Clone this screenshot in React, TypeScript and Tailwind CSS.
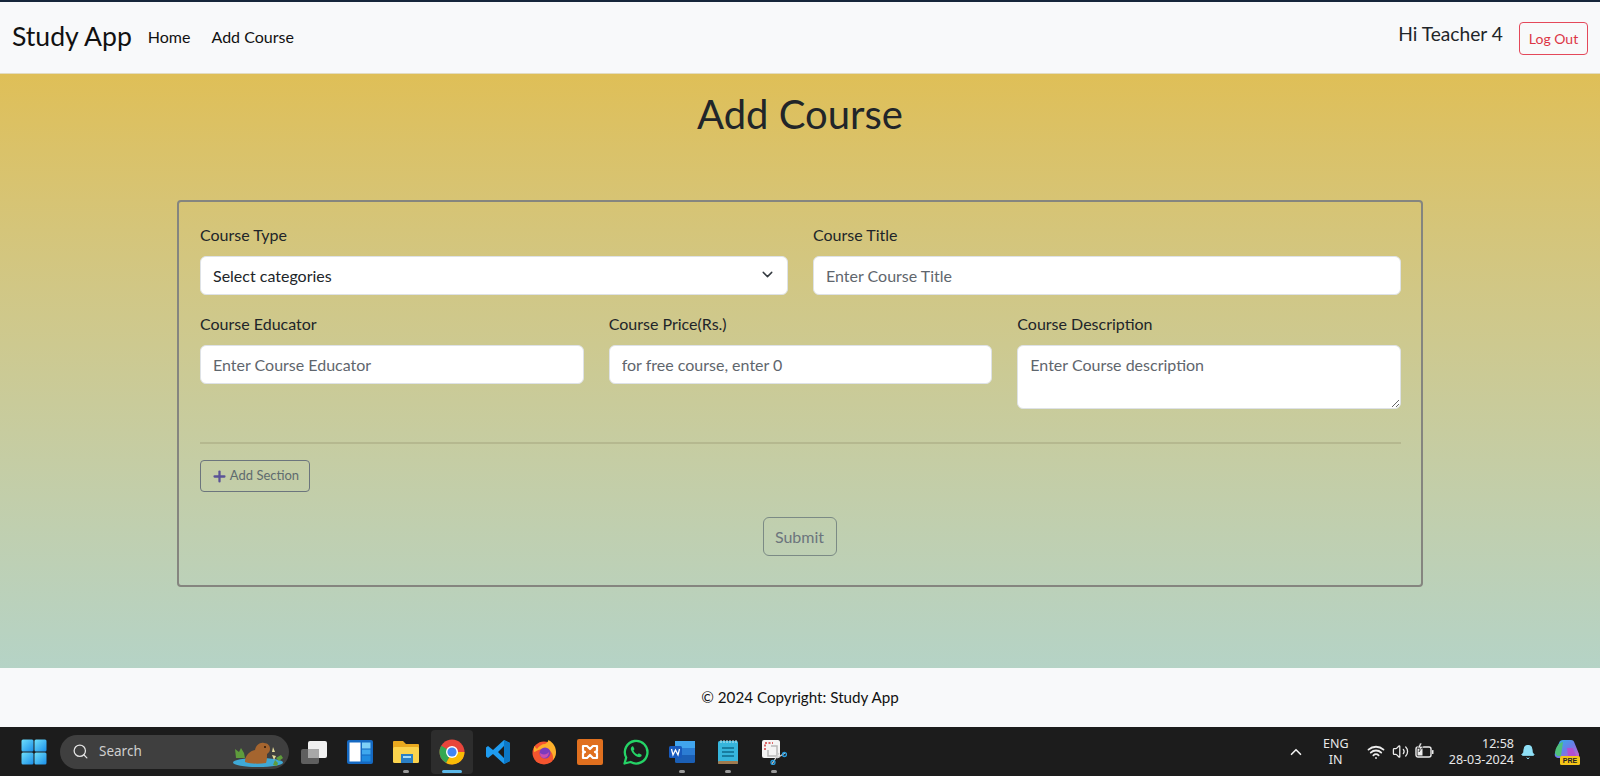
import { ChevronDown, Search, Plus, Wifi, Volume2, ChevronUp, Bell } from "lucide-react";

const field =
  "block w-full h-[39px] rounded-md border border-[#dee2e6] bg-white px-3 text-[16px] text-[#212529] placeholder:text-[#5f666d] outline-none";

function Label({ children }: { children: string }) {
  return <label className="block mb-[9px] h-[24px] leading-[24px] text-[16px] text-[#212529]">{children}</label>;
}

function Slot({ children, active, dot }: { children: React.ReactNode; active?: boolean; dot?: boolean }) {
  return (
    <div className={`relative flex h-[44px] items-center justify-center rounded ${active ? "mx-[2px] w-[42px] bg-[#2d2d2d]" : "w-[46px]"}`}>
      {children}
      {active && <span className="absolute bottom-[1px] left-[11px] h-[3px] w-[20px] rounded-full bg-[#5cb8e8]" />}
      {dot && <span className="absolute bottom-[1px] left-[20px] h-[3px] w-[6px] rounded-full bg-[#9a9a9a]" />}
    </div>
  );
}

function Taskbar() {
  return (
    <div className="flex h-[49px] items-center justify-between bg-[#1c1c1c] font-['Noto_Sans',sans-serif] text-white">
      <div className="flex items-center">
        <div className="flex pl-[21px] pr-[13px]">
          <svg width="26" height="26" viewBox="0 0 26 26">
            <defs>
              <linearGradient id="win" x1="0" y1="0" x2="1" y2="1">
                <stop offset="0" stopColor="#6fe0fb" />
                <stop offset="1" stopColor="#1a8ee8" />
              </linearGradient>
            </defs>
            <rect x="0.5" y="0.5" width="12" height="12" rx="1.5" fill="url(#win)" />
            <rect x="13.5" y="0.5" width="12" height="12" rx="1.5" fill="url(#win)" />
            <rect x="0.5" y="13.5" width="12" height="12" rx="1.5" fill="url(#win)" />
            <rect x="13.5" y="13.5" width="12" height="12" rx="1.5" fill="url(#win)" />
          </svg>
        </div>
        <div className="relative flex h-[34px] w-[229px] items-center rounded-full bg-[#3f3f3f] pl-[12px]">
          <Search size={17} strokeWidth={1.8} className="text-[#e4e4e4]" />
          <span className="ml-[10px] text-[13.5px] text-[#cfcfcf]">Search</span>
          <svg className="absolute right-[4px] top-[5px]" width="56" height="28" viewBox="0 0 56 28">
            <ellipse cx="29" cy="22.500" rx="25" ry="4.500" fill="#3fa9d6" />
            <path d="M7 18l-1-9 4 3 2-4 3 5 1 5z" fill="#5f9c3c" />
            <path d="M16 22c0-7 5-11 10-12 1-5 5-8 9-7 4 0 6 3 6 6 0 3-2 4-3 5 0 3 0 6-1 9-7 1-15 1-21-1z" fill="#a5652f" />
            <circle cx="36" cy="7" r="1" fill="#2a1608" />
            <path d="M44 25V12M43 12l1-5 2 5zM45 20l-2-5 4 1z" fill="#e6dc9a" />
            <path d="M47 18l5-3 2 3-4 3zM44 25l2-5 3 3-1 3z" fill="#5f9c3c" />
          </svg>
        </div>
        <div className="ml-[2px] flex items-center">
          <Slot>
            <svg width="28" height="26" viewBox="0 0 28 26">
              <rect x="1" y="10" width="18" height="15" rx="2" fill="#5f5f5f" />
              <rect x="8" y="2" width="19" height="17" rx="2" fill="#f1f1f1" />
              <rect x="8" y="10" width="11" height="9" fill="#a8a8a8" />
            </svg>
          </Slot>
          <Slot>
            <svg width="26" height="24" viewBox="0 0 26 24">
              <rect width="26" height="24" rx="2" fill="#1569c2" />
              <rect x="2.5" y="2.5" width="11" height="19" fill="#fff" />
              <rect x="15" y="2.5" width="8.5" height="6" fill="#7fd0f7" />
              <rect x="15" y="9.5" width="8.5" height="5" fill="#3fa8ee" />
              <rect x="15" y="15.5" width="8.5" height="6" fill="#1f8be0" />
            </svg>
          </Slot>
          <Slot dot>
            <svg width="28" height="24" viewBox="0 0 28 24">
              <path d="M1 2a1 1 0 011-1h9l3 3h12a1 1 0 011 1v4H1z" fill="#e9a91f" />
              <rect x="1" y="7" width="26" height="16" rx="1.5" fill="#fbd34d" />
              <rect x="9" y="14" width="12" height="9" fill="#2b7fc4" />
              <rect x="11" y="16" width="8" height="2" fill="#a6dcf7" />
            </svg>
          </Slot>
          <Slot active>
            <svg width="26" height="26" viewBox="0 0 26 26">
              <circle cx="13" cy="13" r="12.5" fill="#e8453c" />
              <path d="M13 13L2.2 19.2A12.5 12.5 0 0 1 2.2 6.8z" fill="#34a853" />
              <path d="M13 13h12.5A12.5 12.5 0 0 1 7 24l6-11z" fill="#fbbc05" />
              <path d="M13 13L7 24A12.5 12.5 0 0 1 1.5 18z" fill="#34a853" />
              <circle cx="13" cy="13" r="6" fill="#fff" />
              <circle cx="13" cy="13" r="4.6" fill="#4285f4" />
            </svg>
          </Slot>
          <Slot>
            <svg width="26" height="26" viewBox="0 0 26 26">
              <path d="M19 1l6 3v18l-6 3L8 15l-5 4-2-1.500V8.500L3 7l5 4zM19 7l-6 6 6 6z" fill="#1f9cf0" fillRule="evenodd" />
              <path d="M19 1l6 3v18l-6 3z" fill="#0b78c8" />
            </svg>
          </Slot>
          <Slot>
            <svg width="26" height="26" viewBox="0 0 26 26">
              <circle cx="13" cy="14" r="11.500" fill="#f5552f" />
              <path d="M3 7l3 3c2-3 5-5 8-5 4-2 3-4 3-4 3 1 8 5 8 12 0 3-1 6-3 8 1-7-4-12-10-11-5 0-7 3-9 3z" fill="#fdb02b" />
              <circle cx="14" cy="14" r="5.500" fill="#7b3bbd" />
              <path d="M9 14c2 2 7 2 9-1 0 3-2 6-5 6-3 0-4-3-4-5z" fill="#c94fb0" />
            </svg>
          </Slot>
          <Slot>
            <svg width="26" height="26" viewBox="0 0 26 26">
              <rect width="26" height="26" rx="2" fill="#e0701f" />
              <path d="M6 7h4l3 3 3-3h4v5l-2 1 2 1v5h-4l-3-3-3 3H6v-5l2-1-2-1z" fill="none" stroke="#fff" strokeWidth="2.200" strokeLinejoin="round" />
            </svg>
          </Slot>
          <Slot>
            <svg width="26" height="26" viewBox="0 0 26 26">
              <path d="M1.500 24.500l1.700-6A11.300 11.300 0 1 1 7.600 23z" fill="none" stroke="#25d366" strokeWidth="2.300" strokeLinejoin="round" />
              <path d="M9 7.500c-1 .8-1.500 2-1 3.500 1 3 4 6 7 7 1.500.4 3 0 3.600-1.300.2-.5 0-1-.4-1.200l-2-1c-.4-.2-.8 0-1 .3l-.6.800c-2-.7-3.400-2.200-4.200-4l.7-.8c.3-.3.300-.6.200-1l-.9-2c-.3-.5-1-.7-1.400-.3z" fill="#25d366" />
            </svg>
          </Slot>
          <Slot dot>
            <svg width="26" height="24" viewBox="0 0 26 24">
              <rect x="6" y="1" width="20" height="22" rx="1.500" fill="#1b5fb5" />
              <rect x="6" y="1" width="20" height="7" fill="#41a5ee" />
              <rect x="6" y="8" width="20" height="7" fill="#2b7cd3" />
              <rect x="0" y="6" width="13" height="12" rx="1.500" fill="#185abd" />
              <path d="M2.500 9l1.500 6 2.500-5 2.500 5 1.500-6" fill="none" stroke="#fff" strokeWidth="1.300" />
            </svg>
          </Slot>
          <Slot dot>
            <svg width="22" height="26" viewBox="0 0 22 26">
              <rect x="1" y="2" width="20" height="23" rx="1.500" fill="#36b5dc" />
              <rect x="1" y="22" width="20" height="3" rx="1" fill="#a07a4e" />
              <path d="M5 9h12M5 13h12M5 17h12" stroke="#0f6b8c" strokeWidth="1.600" />
              <path d="M4 1v3M7 1v3M10 1v3M13 1v3M16 1v3M19 1v3" stroke="#bfe8f5" strokeWidth="1" />
            </svg>
          </Slot>
          <Slot dot>
            <svg width="26" height="26" viewBox="0 0 26 26">
              <rect x="1" y="1" width="18" height="18" rx="2" fill="#f4f4f4" />
              <path d="M4 11V4h8" fill="none" stroke="#d43c3c" strokeWidth="1.500" strokeDasharray="2 1.500" />
              <path d="M10 7h6v10H7v-6" fill="none" stroke="#b8b8b8" strokeWidth="1.500" />
              <path d="M11 25l7-11M24 14l-8 5" stroke="#d0d0d0" strokeWidth="1.300" />
              <circle cx="12" cy="23.500" r="2" fill="none" stroke="#2a9fe0" strokeWidth="1.300" />
              <circle cx="23.500" cy="15.500" r="2" fill="none" stroke="#2a9fe0" strokeWidth="1.300" />
            </svg>
          </Slot>
        </div>
      </div>

      <div className="flex items-center pr-[20px]">
        <ChevronUp size={18} strokeWidth={2.200} className="mr-[15px] text-[#f0f0f0]" />
        <div className="mr-[15px] flex w-[32px] flex-col items-center text-[12.5px] leading-[16px] text-[#e8e8e8]">
          <span>ENG</span>
          <span>IN</span>
        </div>
        <Wifi size={18} strokeWidth={2.400} className="mr-[7px] text-[#ececec]" />
        <Volume2 size={17} strokeWidth={1.800} className="mr-[6px] text-[#ececec]" />
        <svg width="19" height="19" viewBox="0 0 19 19" className="mr-[15px] text-[#ececec]">
          <rect x="1" y="5" width="15" height="10" rx="2" fill="none" stroke="currentColor" strokeWidth="1.400" />
          <rect x="2.500" y="6.500" width="5" height="7" fill="currentColor" />
          <rect x="17" y="8" width="1.500" height="4" rx="0.500" fill="currentColor" />
          <path d="M5 1L2.500 6h2.500L4 10l4-5.500H5.500L7 1z" fill="currentColor" stroke="#1c1c1c" strokeWidth="0.600" />
        </svg>
        <div className="flex flex-col items-end text-[12.5px] leading-[16px] text-[#e8e8e8]">
          <span>12:58</span>
          <span>28-03-2024</span>
        </div>
        <Bell size={16} fill="#8fe0f7" strokeWidth={1.500} className="ml-[6px] mr-[18px] text-[#8fe0f7]" />
        <svg width="26" height="26" viewBox="0 0 26 26">
          <defs>
            <linearGradient id="cp" x1="0" y1="0" x2="1" y2="1">
              <stop offset="0" stopColor="#2bb7e8" />
              <stop offset="0.500" stopColor="#6a7de8" />
              <stop offset="1" stopColor="#d65bc4" />
            </linearGradient>
          </defs>
          <path d="M9 1h8c2 0 3 1 3.500 3L25 15c.5 2.500-1 4-3 4H5c-3 0-5-2-4-5L5 4c.5-2 2-3 4-3z" fill="url(#cp)" />
          <path d="M1 14C1.500 9 4 4 9 3l-2 14H3z" fill="#4fc07a" />
          <path d="M13 9h6l3 8h-8z" fill="#b24fd0" />
          <rect x="6" y="17" width="20" height="9" rx="1.500" fill="#f5c518" />
          <text x="16" y="24" textAnchor="middle" fontSize="7" fontWeight="700" fill="#222" fontFamily="'Liberation Sans', sans-serif">PRE</text>
        </svg>
      </div>
    </div>
  );
}

export default function App() {
  return (
    <div className="flex h-[776px] flex-col overflow-hidden font-['Lato',sans-serif] text-[#212529]">
      <nav className="flex h-[74px] items-center justify-between border-t-2 border-b border-t-[#16263a] border-b-[#e3dcc0] bg-[#f8f9fa] pb-[2px] pl-[12px] pr-[12px]">
        <div className="flex items-center">
          <span className="text-[26.6px] leading-none text-[#111]">Study App</span>
          <span className="ml-[16px] text-[16px] text-[#111]">Home</span>
          <span className="ml-[21px] text-[16px] text-[#111]">Add Course</span>
        </div>
        <div className="flex items-center">
          <span className="mb-[5px] text-[19.2px] text-[#212529]">Hi Teacher 4</span>
          <button className="ml-[16px] mt-[3px] h-[33px] w-[69px] rounded border border-[#e4485a] text-[14px] text-[#dc3545]">Log Out</button>
        </div>
      </nav>

      <main className="flex flex-1 flex-col items-center bg-gradient-to-b from-[#dfbf57] to-[#b5d3c6]">
        <h1 className="mt-[10px] h-[60px] text-[40px] leading-[60px] text-[#212529]">Add Course</h1>
        <form className="mt-[56px] w-[1246px] rounded border-2 border-[#85857f] pl-[21px] pr-[20px] pt-[21px]">
          <div className="grid grid-cols-2 gap-x-[25px]">
            <div>
              <Label>Course Type</Label>
              <div className="relative">
                <select className={`${field} appearance-none text-[#111]`} defaultValue="">
                  <option value="">Select categories</option>
                </select>
                <ChevronDown size={17} strokeWidth={2} className="pointer-events-none absolute right-[12px] top-[10px] text-[#343a40]" />
              </div>
            </div>
            <div>
              <Label>Course Title</Label>
              <input className={field} placeholder="Enter Course Title" />
            </div>
          </div>

          <div className="mt-[17px] grid grid-cols-3 gap-x-[25px]">
            <div>
              <Label>Course Educator</Label>
              <input className={field} placeholder="Enter Course Educator" />
            </div>
            <div>
              <Label>Course Price(Rs.)</Label>
              <input className={field} placeholder="for free course, enter 0" />
            </div>
            <div>
              <Label>Course Description</Label>
              <textarea
                className="block h-[64px] w-full rounded-md border border-[#dee2e6] bg-white px-3 py-[7px] text-[16px] text-[#212529] placeholder:text-[#5f666d] outline-none"
                placeholder="Enter Course description"
              />
            </div>
          </div>

          <hr className="mt-[33px] border-t-2 border-[#b5b88f]" />

          <button type="button" className="mt-[16px] flex h-[32px] w-[110px] items-center justify-center gap-[2px] rounded border border-[#6c757d] text-[13px] text-[#5f6b6e]">
            <Plus size={17} strokeWidth={3.200} className="text-[#5b5397]" />
            Add Section
          </button>

          <div className="mt-[25px] flex justify-center pb-[29px] pr-[2px]">
            <button type="button" className="h-[39px] w-[74px] rounded-md border border-[#7b8a85] text-[16px] text-[#6c757d]">Submit</button>
          </div>
        </form>
      </main>

      <footer className="flex h-[59px] items-center justify-center bg-[#f8f9fa] text-[15.2px] text-[#111]">
        © 2024 Copyright: Study App
      </footer>

      <Taskbar />
    </div>
  );
}
